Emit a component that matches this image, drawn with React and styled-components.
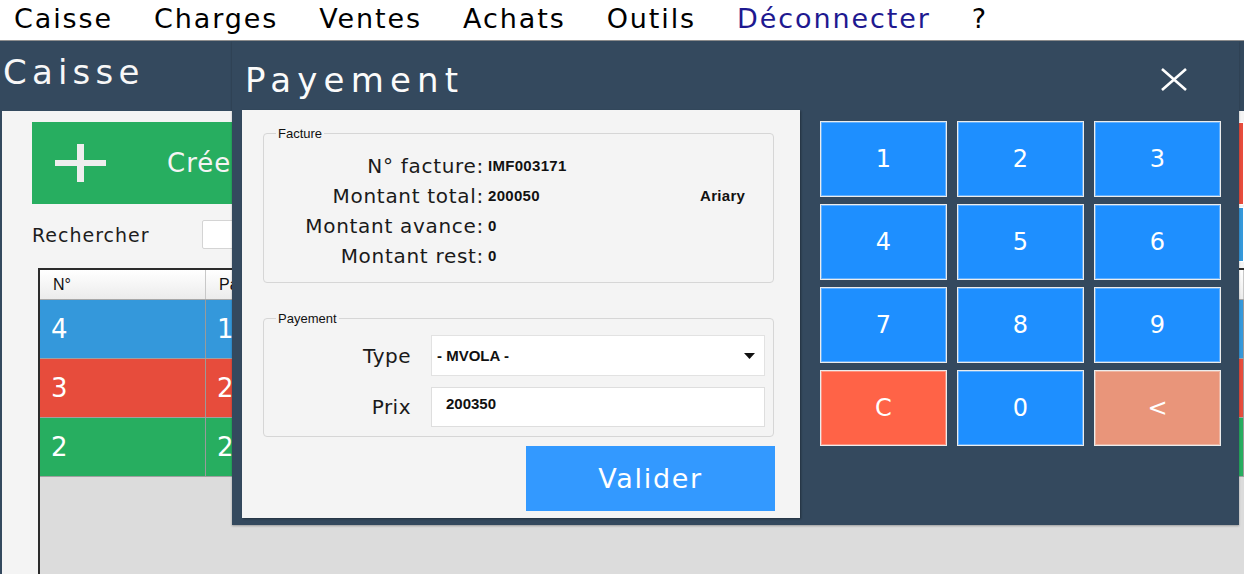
import React from "react";
import styled, { createGlobalStyle } from "styled-components";

const GlobalStyle = createGlobalStyle`
  html, body {
    margin: 0;
    padding: 0;
  }
  body {
    width: 1244px;
    height: 574px;
    overflow: hidden;
    background: #dcdcdc;
    font-family: "DejaVu Sans", sans-serif;
  }
  * {
    box-sizing: border-box;
  }
`;

const menu = ["Caisse", "Charges", "Ventes", "Achats", "Outils", "Déconnecter", "?"];

const rows = [
  { id: 4, paid: 1, color: "#3498db" },
  { id: 3, paid: 2, color: "#e74c3c" },
  { id: 2, paid: 2, color: "#27ae60" },
];

const keys = [
  { label: "1" }, { label: "2" }, { label: "3" },
  { label: "4" }, { label: "5" }, { label: "6" },
  { label: "7" }, { label: "8" }, { label: "9" },
  { label: "C", variant: "clear" }, { label: "0" }, { label: "<", variant: "back" },
];

const keyColors = {
  digit: "#1e8fff",
  clear: "#ff6347",
  back: "#e9957a",
};

export default function App() {
  return (
    <>
      <GlobalStyle />
      <Screen>
        <MenuBar>
          {menu.map((item) => (
            <MenuItem key={item} $link={item === "Déconnecter"}>
              {item}
            </MenuItem>
          ))}
        </MenuBar>

        <Window>
          <WindowTitle>Caisse</WindowTitle>
          <Panel>
            <ActionRow>
              <CreateButton>
                <svg width="51" height="38" viewBox="0 0 51 38">
                  <rect x="0" y="16" width="51" height="6" fill="#eeeeee" />
                  <rect x="22" y="0" width="7" height="38" fill="#eeeeee" />
                </svg>
                Créer
              </CreateButton>
              <SideButton $color="#e74c3c" $h={83} />
            </ActionRow>

            <SearchRow>
              <SearchLabel>Rechercher</SearchLabel>
              <SearchInput readOnly />
              <SideButton $color="#3498db" $h={55} />
            </SearchRow>

            <Table>
              <HeadRow>
                <HeadCell>N°</HeadCell>
                <HeadCell>Payé</HeadCell>
                <HeadCell>Date</HeadCell>
                <HeadCell>Client</HeadCell>
                <HeadCell>Montant</HeadCell>
              </HeadRow>
              {rows.map((r) => (
                <DataRow key={r.id} $bg={r.color}>
                  <DataCell>{r.id}</DataCell>
                  <DataCell>{r.paid}</DataCell>
                  <DataCell />
                  <DataCell />
                  <DataCell />
                </DataRow>
              ))}
            </Table>
          </Panel>

          <Modal>
            <ModalHeader>
              <ModalTitle>Payement</ModalTitle>
              <CloseButton aria-label="Fermer">
                <svg width="28" height="23" viewBox="0 0 28 23">
                  <path d="M2 1 L26 22 M26 1 L2 22" stroke="#fff" strokeWidth="2.6" fill="none" />
                </svg>
              </CloseButton>
            </ModalHeader>

            <ModalBody>
              <FormPanel>
                <Fieldset>
                  <Legend>Facture</Legend>
                  <InfoList>
                    <InfoRow>
                      <InfoLabel>N° facture:</InfoLabel>
                      <InfoValue>IMF003171</InfoValue>
                    </InfoRow>
                    <InfoRow>
                      <InfoLabel>Montant total:</InfoLabel>
                      <InfoValue>200050</InfoValue>
                      <InfoValue>Ariary</InfoValue>
                    </InfoRow>
                    <InfoRow>
                      <InfoLabel>Montant avance:</InfoLabel>
                      <InfoValue>0</InfoValue>
                    </InfoRow>
                    <InfoRow>
                      <InfoLabel>Montant rest:</InfoLabel>
                      <InfoValue>0</InfoValue>
                    </InfoRow>
                  </InfoList>
                </Fieldset>

                <Fieldset $gap>
                  <Legend>Payement</Legend>
                  <PayGrid>
                    <FieldLabel>Type</FieldLabel>
                    <SelectBox>
                      - MVOLA -
                      <svg width="11" height="6" viewBox="0 0 11 6">
                        <path d="M0 0 H11 L5.5 6 Z" fill="#111" />
                      </svg>
                    </SelectBox>
                    <FieldLabel>Prix</FieldLabel>
                    <PriceInput readOnly value="200350" />
                  </PayGrid>
                </Fieldset>

                <Footer>
                  <ValidateButton>Valider</ValidateButton>
                </Footer>
              </FormPanel>

              <Keypad>
                {keys.map((k) => (
                  <Key key={k.label} $variant={k.variant || "digit"}>
                    {k.label}
                  </Key>
                ))}
              </Keypad>
            </ModalBody>
          </Modal>
        </Window>
      </Screen>
    </>
  );
}

const Screen = styled.div`
  height: 574px;
  display: flex;
  flex-direction: column;
`;

const MenuBar = styled.nav`
  height: 41px;
  flex-shrink: 0;
  background: #fff;
  border-bottom: 1px solid #8f8f8f;
  display: flex;
  align-items: center;
  gap: 41px;
  padding: 0 0 4px 14px;
`;

const MenuItem = styled.span`
  font-size: 27px;
  letter-spacing: 1.9px;
  line-height: 1;
  color: ${(p) => (p.$link ? "#1e1990" : "#000")};
`;

const Window = styled.div`
  flex: 1;
  min-height: 0;
  position: relative;
  background: #34495e;
  display: flex;
  flex-direction: column;
`;

const WindowTitle = styled.h1`
  margin: 0;
  height: 70px;
  flex-shrink: 0;
  display: flex;
  align-items: center;
  padding: 0 0 9px 3px;
  font-size: 34px;
  font-weight: normal;
  letter-spacing: 5.2px;
  color: #f7f7f7;
`;

const Panel = styled.div`
  flex: 1;
  min-height: 0;
  margin-left: 2px;
  background: #f4f4f4;
  display: flex;
  flex-direction: column;
`;

const ActionRow = styled.div`
  display: flex;
  align-items: flex-start;
  margin-top: 11px;
  padding-left: 30px;
  height: 82px;
`;

const CreateButton = styled.div`
  width: 420px;
  height: 82px;
  background: #27ae60;
  display: flex;
  align-items: center;
  gap: 61px;
  padding-left: 23px;
  color: #f4f4f4;
  font-size: 26px;
  letter-spacing: 1px;
`;

const SideButton = styled.div`
  margin-left: auto;
  width: 180px;
  height: ${(p) => p.$h}px;
  background: ${(p) => p.$color};
  border: 1px solid #fff;
`;

const SearchRow = styled.div`
  display: flex;
  align-items: center;
  height: 55px;
  margin-top: 3px;
  padding-left: 30px;
`;

const SearchLabel = styled.span`
  width: 170px;
  font-size: 19px;
  letter-spacing: 1px;
  color: #1d1d1d;
`;

const SearchInput = styled.input`
  width: 260px;
  height: 29px;
  background: #fff;
  border: 1px solid #d4d4d4;
  border-radius: 2px;
`;

const Table = styled.div`
  flex: 1;
  margin: 6px 0 0 36px;
  background: #dcdcdc;
  border-top: 2px solid #2b2b2b;
  border-left: 2px solid #2b2b2b;
  display: flex;
  flex-direction: column;
`;

const TRow = styled.div`
  display: grid;
  grid-template-columns: 166px 180px 240px 240px 1fr;
`;

const HeadRow = styled(TRow)`
  height: 30px;
  background: linear-gradient(#ffffff, #ececec);
  border-bottom: 1px solid #a8a8a8;
`;

const HeadCell = styled.div`
  display: flex;
  align-items: center;
  padding-left: 13px;
  font-family: "Liberation Sans", Arial, sans-serif;
  font-size: 16px;
  color: #111;
  border-right: 1px solid #c8c8c8;
`;

const DataRow = styled(TRow)`
  height: 59px;
  background: ${(p) => p.$bg};
  border-bottom: 1px solid #a0a0a0;
`;

const DataCell = styled.div`
  display: flex;
  align-items: center;
  padding-left: 11px;
  font-size: 26px;
  color: #fff;
  border-right: 1px solid #9a9a9a;
`;

const Modal = styled.section`
  position: absolute;
  left: 232px;
  top: 0;
  width: 1007px;
  height: 484px;
  background: #34495e;
  display: flex;
  flex-direction: column;
  box-shadow: 0 1px 2px rgba(0, 0, 0, 0.3);
`;

const ModalHeader = styled.header`
  height: 69px;
  flex-shrink: 0;
  display: flex;
  align-items: center;
  justify-content: space-between;
  padding: 8px 51px 0 13px;
`;

const ModalTitle = styled.h2`
  margin: 0;
  font-size: 34px;
  font-weight: normal;
  letter-spacing: 6.2px;
  color: #fbfbfb;
`;

const CloseButton = styled.button`
  background: none;
  border: none;
  padding: 0;
  width: 28px;
  height: 23px;
  display: flex;
`;

const ModalBody = styled.div`
  flex: 1;
  display: flex;
  padding: 0 0 7px 10px;
`;

const FormPanel = styled.div`
  width: 558px;
  background: #f4f4f4;
  display: flex;
  flex-direction: column;
  padding: 16px 0 0 21px;
  box-shadow: 1px 1px 2px rgba(0, 0, 0, 0.35);
`;

const Fieldset = styled.fieldset`
  width: 511px;
  min-width: 0;
  margin: ${(p) => (p.$gap ? "28px 0 0" : "0")};
  padding: 0;
  border: 1px solid #d6d6d6;
  border-radius: 4px;
`;

const Legend = styled.legend`
  margin-left: 12px;
  padding: 0 2px;
  font-family: "Liberation Sans", Arial, sans-serif;
  font-size: 13px;
  color: #111;
`;

const InfoList = styled.div`
  padding: 10px 0 11px;
`;

const InfoRow = styled.div`
  display: grid;
  grid-template-columns: 220px 208px 1fr;
  column-gap: 4px;
  align-items: center;
  height: 30px;
`;

const InfoLabel = styled.span`
  text-align: right;
  font-size: 20px;
  line-height: 24px;
  letter-spacing: 0.7px;
  color: #1a1a1a;
`;

const InfoValue = styled.span`
  font-family: "Liberation Sans", Arial, sans-serif;
  font-weight: bold;
  font-size: 15px;
  line-height: 18px;
  letter-spacing: 0.3px;
  color: #111;
`;

const PayGrid = styled.div`
  display: grid;
  grid-template-columns: 147px 334px;
  grid-template-rows: 41px 40px;
  column-gap: 20px;
  row-gap: 11px;
  align-items: center;
  padding: 9px 0 9px;
`;

const FieldLabel = styled.span`
  text-align: right;
  font-size: 20px;
  letter-spacing: 0.5px;
  color: #1a1a1a;
`;

const SelectBox = styled.div`
  height: 41px;
  background: #fff;
  border: 1px solid #e2e2e2;
  display: flex;
  align-items: center;
  justify-content: space-between;
  padding: 0 9px 0 5px;
  font-family: "Liberation Sans", Arial, sans-serif;
  font-weight: bold;
  font-size: 15px;
  color: #111;
`;

const PriceInput = styled.input`
  height: 40px;
  width: 100%;
  background: #fff;
  border: 1px solid #dedede;
  padding: 0 0 8px 14px;
  font-family: "Liberation Sans", Arial, sans-serif;
  font-weight: bold;
  font-size: 15px;
  color: #111;
  outline: none;
`;

const Footer = styled.div`
  width: 512px;
  display: flex;
  justify-content: flex-end;
  margin-top: 9px;
`;

const ValidateButton = styled.button`
  width: 249px;
  height: 65px;
  border: none;
  background: #3399ff;
  color: #fff;
  font-family: "DejaVu Sans", sans-serif;
  font-size: 27px;
  letter-spacing: 1.7px;
`;

const Keypad = styled.div`
  margin: 11px 0 0 20px;
  display: grid;
  grid-template-columns: repeat(3, 127px);
  grid-auto-rows: 76px;
  column-gap: 10px;
  row-gap: 7px;
  align-content: start;
`;

const Key = styled.button`
  background: ${(p) => keyColors[p.$variant]};
  border: 1px solid #ececec;
  box-shadow: inset 0 0 0 1px rgba(255, 255, 255, 0.3);
  color: #fff;
  font-family: "DejaVu Sans", sans-serif;
  font-size: 24px;
  padding: 0;
`;
